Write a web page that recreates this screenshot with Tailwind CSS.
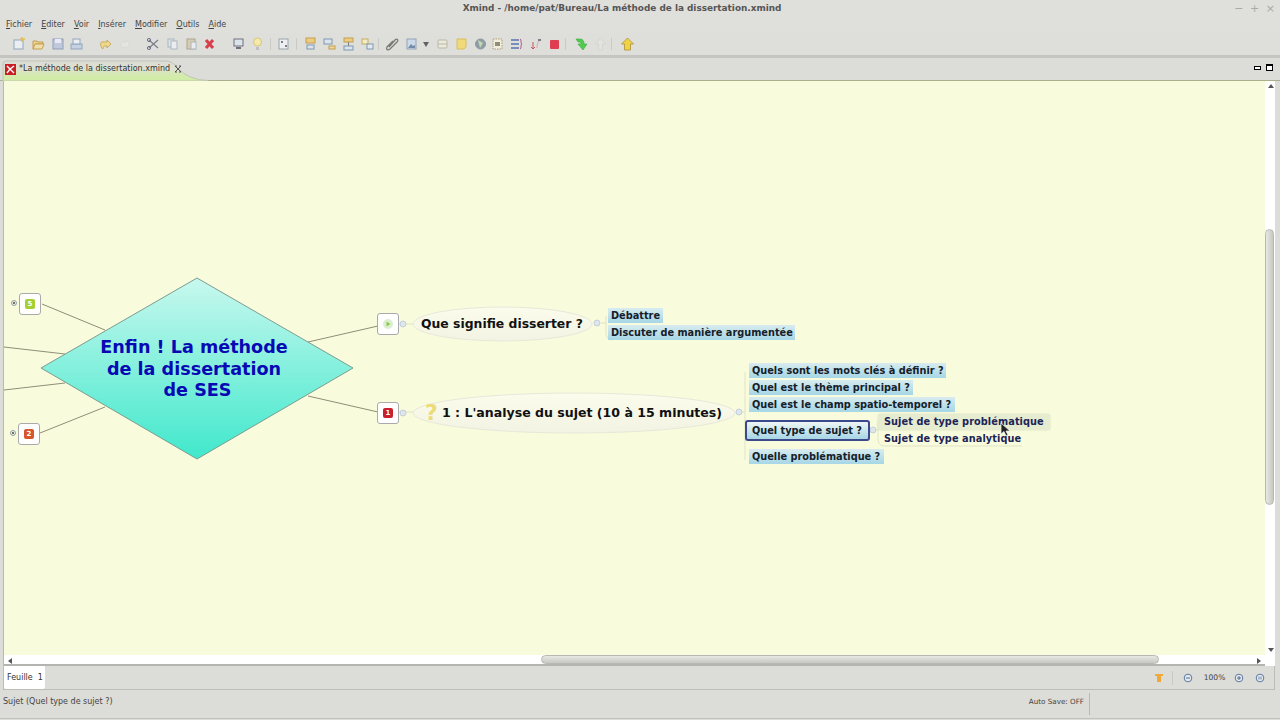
<!DOCTYPE html>
<html lang="fr">
<head>
<meta charset="UTF-8">
<title>Xmind</title>
<script src="https://cdn.jsdelivr.net/npm/@tailwindcss/browser@4"></script>
</head>
<body class="w-[1280px] h-[720px] overflow-hidden bg-[#dcdcd8] font-['DejaVu_Sans',sans-serif] text-[#3c3c3c]">

<!-- title bar -->
<div class="h-[17px] flex items-center relative bg-[#dfdfdb]">
  <div class="w-full text-center text-[8.9px] font-bold text-[#555] pr-[36px]">Xmind - /home/pat/Bureau/La méthode de la dissertation.xmind</div>
  <div class="absolute right-[5px] top-[3px] flex gap-[6.5px] text-[11px] leading-3 text-[#aaa]"><span>−</span><span>+</span><span>×</span></div>
</div>

<!-- menu -->
<div class="h-4 flex items-center pl-[6px] gap-[9px] text-[8px] text-[#444] bg-[#dfdfdb]">
  <span><u>F</u>ichier</span><span><u>E</u>diter</span><span><u>V</u>oir</span><span><u>I</u>nsérer</span><span><u>M</u>odifier</span><span><u>O</u>utils</span><span><u>A</u>ide</span>
</div>

<!-- toolbar -->
<div class="h-[25px] bg-[#dededa] border-b-[3px] border-[#c4c4c0]">
<div class="h-[22px] flex items-center pl-[10px] opacity-80">
  <svg class="w-[19px] h-4" viewBox="0 0 19 16"><rect x="4" y="4" width="9" height="9" fill="#eef3f8" stroke="#7f9ab5"/><path d="M12 1v5M10 3h5" stroke="#e4b93c" stroke-width="1.5"/></svg>
  <svg class="w-[19px] h-4" viewBox="0 0 19 16"><path d="M4 5h4l1 1h5v2H7l-2 5H4z" fill="#f0d080" stroke="#c09030"/><path d="M6 8h9l-2 5H4z" fill="#f6e0a0" stroke="#c09030"/></svg>
  <svg class="w-[19px] h-4" viewBox="0 0 19 16"><rect x="5" y="3" width="10" height="10" fill="#b8c4e0" stroke="#8090b0"/><rect x="7" y="3" width="6" height="4" fill="#eef"/></svg>
  <svg class="w-[19px] h-4" viewBox="0 0 19 16"><rect x="4" y="8" width="11" height="5" fill="#c0d0e4" stroke="#8098b8"/><rect x="6" y="3" width="7" height="5" fill="#eef2f8" stroke="#8098b8"/></svg>

  <svg class="w-[19px] h-4 ml-[9.5px]" viewBox="0 0 19 16"><path d="M4 8l4-4v2h5c2 0 2 5-1 7 0-3-1-3-4-3v2z" transform="matrix(-1 0 0 1 19 0)" fill="#f2d878" stroke="#c4a040"/></svg>
  <svg class="w-[19px] h-4" viewBox="0 0 19 16"><path d="M15 8l-4-4v2H6v5h5v2z" fill="#e6e6e2" stroke="#d8d8d4"/></svg>

  <svg class="w-[19px] h-4 ml-[10px]" viewBox="0 0 19 16"><path d="M5 12L14 4M5 4l9 8" stroke="#667" stroke-width="1.2"/><circle cx="5" cy="4" r="1.6" fill="none" stroke="#557"/><circle cx="5" cy="12" r="1.6" fill="none" stroke="#557"/></svg>
  <svg class="w-[19px] h-4" viewBox="0 0 19 16"><rect x="5" y="3" width="6" height="8" fill="#dde3ea" stroke="#a0adbc"/><rect x="8" y="5" width="6" height="8" fill="#eef1f5" stroke="#a0adbc"/></svg>
  <svg class="w-[19px] h-4" viewBox="0 0 19 16"><rect x="5" y="3" width="8" height="10" fill="#d8c8a8" stroke="#a09880"/><rect x="9" y="6" width="5" height="7" fill="#eef1f5" stroke="#a0adbc"/></svg>
  <svg class="w-[19px] h-4 -ml-[1px]" viewBox="0 0 19 16"><path d="M6 4l7 8M13 4l-7 8" stroke="#d81828" stroke-width="3"/></svg>

  <svg class="w-[19px] h-4 ml-[10px]" viewBox="0 0 19 16"><rect x="5" y="3" width="9" height="7" fill="#dce6f0" stroke="#556"/><path d="M7 12h5" stroke="#556" stroke-width="2"/></svg>
  <svg class="w-[19px] h-4" viewBox="0 0 19 16"><circle cx="9.5" cy="6" r="4" fill="#fbeea0" stroke="#d8c060"/><path d="M8 11h3v3H8z" fill="#b8bcc0"/></svg>
  <div class="w-px h-3 bg-[#c4c4c0] ml-[3px]"></div>
  <svg class="w-[19px] h-4 ml-[3px]" viewBox="0 0 19 16"><rect x="5" y="3" width="9" height="10" fill="#f2f4f6" stroke="#8a96a2"/><rect x="7" y="5" width="2" height="2" fill="#667"/><rect x="11" y="9" width="2" height="2" fill="#667"/></svg>
  <div class="w-px h-3 bg-[#c4c4c0] ml-[3px]"></div>
  <svg class="w-[19px] h-4 ml-[4px]" viewBox="0 0 19 16"><rect x="5" y="2" width="9" height="5" fill="#f0c868" stroke="#c09030"/><rect x="6" y="9" width="7" height="4" fill="#dce6f0" stroke="#6688aa"/></svg>
  <svg class="w-[19px] h-4" viewBox="0 0 19 16"><rect x="4" y="3" width="8" height="5" fill="#dce6f0" stroke="#6688aa"/><rect x="9" y="10" width="6" height="3" fill="#f0d890" stroke="#c09030"/></svg>
  <svg class="w-[19px] h-4" viewBox="0 0 19 16"><rect x="5" y="2" width="9" height="4" fill="#f0c868" stroke="#c09030"/><rect x="5" y="10" width="9" height="4" fill="#dce6f0" stroke="#6688aa"/><path d="M9.500 6v4" stroke="#667"/></svg>
  <svg class="w-[19px] h-4" viewBox="0 0 19 16"><rect x="4" y="3" width="6" height="5" fill="#f8f0c0" stroke="#c0a040"/><rect x="9" y="8" width="6" height="5" fill="#e8eef4" stroke="#6688aa"/></svg>

  <div class="w-px h-3 bg-[#c4c4c0] ml-[1px]"></div>
  <svg class="w-[19px] h-4 ml-[4px]" viewBox="0 0 19 16"><path d="M6 11l6-7c2-2 4 0 2 2l-7 7c-3 2-4 0-3-2l6-6" fill="none" stroke="#606060" stroke-width="1.3"/></svg>
  <svg class="w-[19px] h-4" viewBox="0 0 19 16"><rect x="5" y="3" width="9" height="10" fill="#c8d8ec" stroke="#8098b0"/><path d="M6 12l3-4 2 2 2-1v3z" fill="#5a7898"/></svg>
  <svg class="w-[11px] h-4" viewBox="0 0 11 16"><path d="M2 6h6l-3 5z" fill="#444"/></svg>
  <svg class="w-[19px] h-4 ml-[1px]" viewBox="0 0 19 16"><rect x="5" y="4" width="9" height="8" rx="1" fill="#f0eee0" stroke="#b0b098"/><path d="M5 8h9" stroke="#b0b098"/></svg>
  <svg class="w-[19px] h-4" viewBox="0 0 19 16"><path d="M5 3h9v8l-2 2H5z" fill="#f4d860" stroke="#d8b840"/></svg>
  <svg class="w-[19px] h-4" viewBox="0 0 19 16"><circle cx="9.500" cy="8" r="5" fill="#7c8c98" stroke="#808890"/><path d="M7 4l5 3-3 5z" fill="#b8d8a8"/></svg>
  <svg class="w-[19px] h-4 -ml-[2px]" viewBox="0 0 19 16"><rect x="5" y="3" width="9" height="10" fill="#f6f2e0" stroke="#a09060" stroke-dasharray="1.500 1"/><rect x="7" y="6" width="5" height="4" fill="#807860"/></svg>
  <svg class="w-[19px] h-4" viewBox="0 0 19 16"><path d="M4 4h8M4 8h8M4 12h8" stroke="#3858a8" stroke-width="1.500"/><path d="M13 3c2 0 0 5 2 5-2 0 0 5-2 5" fill="none" stroke="#b03080"/></svg>
  <svg class="w-[19px] h-4" viewBox="0 0 19 16"><path d="M7 13V6M5 11l2 2 2-2" fill="none" stroke="#c83040"/><path d="M11 12c0-4 1-6 2-7" fill="none" stroke="#c8a0a8"/><rect x="12" y="3" width="3" height="2" fill="#667"/></svg>
  <svg class="w-[19px] h-4" viewBox="0 0 19 16"><rect x="5" y="4" width="9" height="9" rx="1" fill="#e01830"/></svg>

  <div class="w-px h-3 bg-[#c4c4c0] ml-[1px]"></div>
  <svg class="w-[19px] h-4 ml-[6px]" viewBox="0 0 19 16"><path d="M4 3h4c3 0 4 2 4 5h3l-4 6-5-6h3c0-2-1-2-3-2z" fill="#2cc82c" stroke="#1c9c1c" stroke-width=".6"/></svg>
  <svg class="w-[19px] h-4" viewBox="0 0 19 16"><path d="M9.500 2l5 6h-3v6h-4V8h-3z" fill="#e4e4e0" stroke="#d4d4d0"/></svg>
  <div class="w-px h-3 bg-[#c4c4c0] ml-[1px]"></div>
  <svg class="w-[19px] h-4 ml-[6px]" viewBox="0 0 19 16"><path d="M9.500 2l6 6h-3v6h-6V8h-3z" fill="#f8d020" stroke="#a08010" stroke-width=".8"/></svg>
</div>
</div>

<!-- editor tab bar -->
<div class="h-[23px] relative flex items-end bg-[#dcdcd8] border-b border-[#aab08c]">
  <svg class="absolute left-0 top-0 w-[215px] h-[23px]" viewBox="0 0 215 23">
    <defs><linearGradient id="tab" gradientUnits="userSpaceOnUse" x1="0" y1="3" x2="0" y2="23"><stop offset="0" stop-color="#dcdcd8"/><stop offset=".45" stop-color="#dde2cc"/><stop offset=".7" stop-color="#d4eaae"/><stop offset="1" stop-color="#d0eca4"/></linearGradient></defs>
    <path d="M3 23V6q0-3 3-3h160q6 0 12 7q10 12 30 12.500V23z" fill="url(#tab)" stroke="#c2c6b4"/>
  </svg>
  <div class="relative h-[22px] flex items-center pl-[5px] gap-[3px]">
    <svg class="w-[11px] h-[11px]" viewBox="0 0 11 11"><rect width="11" height="11" fill="#c81e24"/><path d="M2 2l3 3 4-3M2 9l3-4 4 4" fill="none" stroke="#fff" stroke-width="1.400"/></svg>
    <span class="text-[8px] text-[#333]">*La méthode de la dissertation.xmind</span>
    <svg class="w-[8px] h-[8px] ml-[1px]" viewBox="0 0 8 8"><path d="M1 1l6 6M7 1L1 7M1 1h2M7 7H5M7 1H5M1 7h2" stroke="#555" fill="none"/></svg>
  </div>
  <div class="absolute right-[7px] top-[6px] flex items-center gap-[5px]">
    <div class="w-[7px] h-[4px] border border-black bg-white"></div>
    <div class="w-[7px] h-[7px] border border-black border-t-2 bg-white"></div>
  </div>
</div>

<!-- canvas + scrollbars -->
<div class="h-[585px] flex pl-[3px] pr-[5px]">
  <div class="w-[1262px] flex flex-col border-l border-[#b8b8b4]">
    <div class="relative h-[574px] overflow-hidden bg-[#f9fcdc]">
      <svg class="absolute inset-0 w-[1261px] h-[574px]" viewBox="4 81 1261 574">
        <defs>
          <linearGradient id="diamond" x1="0" y1="0" x2="0" y2="1"><stop offset="0" stop-color="#c8f8ee"/><stop offset="1" stop-color="#40e8cc"/></linearGradient>
          <linearGradient id="bubble" x1="0" y1="0" x2="0" y2="1"><stop offset="0" stop-color="#fbfcec"/><stop offset="1" stop-color="#f2f3e2"/></linearGradient>
        </defs>
        <g stroke="#8e8e78" fill="none">
          <path d="M42 304L105 330M4 347L65 354M4 390L65 383M40 433L105 407M308 342L378 326M308 396L378 412"/>
        </g>
        <g stroke="#dfe2c4" fill="none">
          <path d="M399 324H413M399 412H413"/>
          <path d="M601 323H606M606 316V332Q606 340 612 340"/>
          <path d="M745 412V372M745 412V460M738 412H745"/>
          <path d="M872 430H878M878 422V438Q878 446 884 446H1022"/>
        </g>
        <path d="M197 278L353 368L197 459L41 368Z" fill="url(#diamond)" stroke="#7d9c90"/>
        <ellipse cx="502.500" cy="324" rx="89.500" ry="17" fill="url(#bubble)" stroke="#e8e8da"/>
        <ellipse cx="574" cy="413" rx="161" ry="20" fill="url(#bubble)" stroke="#e8e8da"/>
        <g fill="#f4f6e2" stroke="#7a8a90" stroke-width=".8">
          <circle cx="14" cy="303" r="2.500"/><circle cx="13" cy="433" r="2.500"/>
        </g>
        <circle cx="14" cy="303" r="1" fill="#444"/><circle cx="13" cy="433" r="1" fill="#444"/>
        <g fill="#dfe6ea" stroke="#b8c8e0" stroke-width=".8">
          <circle cx="403" cy="324" r="3"/><circle cx="403" cy="413" r="3"/><circle cx="597" cy="323" r="3"/><circle cx="739" cy="412" r="3"/><circle cx="873" cy="430" r="3"/>
        </g>
      </svg>

      <!-- central topic -->
      <div class="absolute left-[0px] top-[256px] w-[380px] text-[17.6px] leading-[21.5px] font-bold text-[#0808b4] text-center">
        <div>Enfin ! La méthode</div>
        <div>de la dissertation</div>
        <div class="pl-[7px]">de SES</div>
      </div>

      <!-- marker boxes -->
      <div class="absolute left-[15px] top-[212px] w-[22px] h-[22px] flex items-center justify-center rounded-[3px] bg-white border border-[#aaa]">
        <div class="w-[10px] h-[10px] rounded-[2px] bg-[#a4d030] text-white text-[7px] leading-[10px] font-bold text-center">5</div>
      </div>
      <div class="absolute left-[14px] top-[342px] w-[22px] h-[22px] flex items-center justify-center rounded-[3px] bg-white border border-[#aaa]">
        <div class="w-[10px] h-[10px] rounded-[2px] bg-[#d8562c] text-white text-[7px] leading-[10px] font-bold text-center">2</div>
      </div>
      <div class="absolute left-[373px] top-[232px] w-[22px] h-[22px] flex items-center justify-center rounded-[3px] bg-white border border-[#aaa]">
        <svg class="w-[10px] h-[10px]" viewBox="0 0 10 10"><circle cx="5" cy="5" r="5" fill="#dcefd0"/><path d="M3.500 2.500L7.500 5l-4 2.500z" fill="#8cc850"/></svg>
      </div>
      <div class="absolute left-[373px] top-[321px] w-[22px] h-[22px] flex items-center justify-center rounded-[3px] bg-white border border-[#aaa]">
        <div class="w-[10px] h-[10px] rounded-[2px] bg-[#c8202c] text-white text-[7px] leading-[10px] font-bold text-center">1</div>
      </div>

      <!-- main topics -->
      <div class="absolute left-[417px] top-[234px] text-[12.4px] leading-[18px] font-bold text-[#111] whitespace-nowrap">Que signifie disserter ?</div>
      <div class="absolute left-[421px] top-[320px] text-[22px] leading-6 font-bold text-[#ecdc78]">?</div>
      <div class="absolute left-[438px] top-[323px] text-[12.55px] leading-[18px] font-bold text-[#111] whitespace-nowrap">1 : L'analyse du sujet (10 à 15 minutes)</div>

      <!-- subtopics -->
      <div class="absolute left-[604px] top-[227px] h-[15px] w-[55px] pl-[3px] text-[9.75px] leading-[16px] font-bold text-[#15202a] bg-gradient-to-b from-[#d8ecef] to-[#a6d6e6] whitespace-nowrap">Débattre</div>
      <div class="absolute left-[604px] top-[244px] h-[15px] w-[187px] pl-[3px] text-[9.75px] leading-[16px] font-bold text-[#15202a] bg-gradient-to-b from-[#d8ecef] to-[#a6d6e6] whitespace-nowrap">Discuter de manière argumentée</div>

      <div class="absolute left-[745px] top-[282px] h-[15px] w-[197px] pl-[3px] text-[9.75px] leading-[16px] font-bold text-[#15202a] bg-gradient-to-b from-[#d8ecef] to-[#a6d6e6] whitespace-nowrap">Quels sont les mots clés à définir ?</div>
      <div class="absolute left-[745px] top-[299px] h-[15px] w-[164px] pl-[3px] text-[9.75px] leading-[16px] font-bold text-[#15202a] bg-gradient-to-b from-[#d8ecef] to-[#a6d6e6] whitespace-nowrap">Quel est le thème principal ?</div>
      <div class="absolute left-[745px] top-[316px] h-[15px] w-[206px] pl-[3px] text-[9.75px] leading-[16px] font-bold text-[#15202a] bg-gradient-to-b from-[#d8ecef] to-[#a6d6e6] whitespace-nowrap">Quel est le champ spatio-temporel ?</div>
      <div class="absolute left-[741px] top-[339px] h-[21px] w-[125px] pl-[5px] rounded-[3px] border-2 border-[#3c4a8c] text-[9.75px] leading-[17px] font-bold text-[#15202a] bg-gradient-to-b from-[#eef6f4] to-[#a6d6e6] whitespace-nowrap">Quel type de sujet ?</div>
      <div class="absolute left-[745px] top-[368px] h-[15px] w-[135px] pl-[3px] text-[9.75px] leading-[16px] font-bold text-[#15202a] bg-gradient-to-b from-[#d8ecef] to-[#a6d6e6] whitespace-nowrap">Quelle problématique ?</div>

      <div class="absolute left-[874px] top-[333px] h-[16px] w-[172px] pl-[6px] rounded-[2px] bg-[#e6ecd0] shadow-[0_0_2px_#d0d6b8] text-[9.75px] leading-[16px] font-bold tracking-[0.08px] text-[#1c2458] whitespace-nowrap">Sujet de type problématique</div>
      <div class="absolute left-[880px] top-[350px] text-[9.75px] leading-[16px] font-bold tracking-[0.08px] text-[#1c2458] whitespace-nowrap">Sujet de type analytique</div>

      <svg class="absolute left-[996px] top-[341px] w-[12px] h-[16px]" viewBox="0 0 12 16"><path d="M1 1v11l3-2.500 2 4.500 2-1-2-4h4z" fill="#222" stroke="#eee" stroke-width=".8"/></svg>
    </div>
    <!-- horizontal scrollbar -->
    <div class="h-[11px] flex items-center bg-white border-b-2 border-[#b4b4b0] relative">
      <span class="absolute left-[4px] top-[3px] w-0 h-0 border-y-[3px] border-y-transparent border-r-[4px] border-r-[#555]"></span>
      <div class="absolute left-[537px] top-0 w-[618px] h-[9px] rounded-full bg-gradient-to-b from-[#e8e8e4] to-[#c8c8c2] border border-[#b8b8b4]"></div>
      <span class="absolute right-[4px] top-[3px] w-0 h-0 border-y-[3px] border-y-transparent border-l-[4px] border-l-[#555]"></span>
    </div>
  </div>
  <!-- vertical scrollbar -->
  <div class="w-[10px] h-[585px] relative bg-white">
    <span class="absolute left-[3px] top-[3px] w-0 h-0 border-x-[3px] border-x-transparent border-b-[4px] border-b-[#555]"></span>
    <div class="absolute left-0 top-[148px] w-[9px] h-[276px] rounded-full bg-gradient-to-r from-[#e8e8e4] to-[#c8c8c2] border border-[#b8b8b4]"></div>
    <span class="absolute left-[3px] top-[567px] w-0 h-0 border-x-[3px] border-x-transparent border-t-[4px] border-t-[#555]"></span>
  </div>
</div>

<!-- sheet tabs -->
<div class="h-[24px] ml-[3px] mr-[5px] flex items-stretch border-x border-b border-[#bcbcb8]">
  <div class="w-[41px] bg-white text-[8px] leading-[24px] pl-[3px] text-[#333] rounded-b-[2px] whitespace-nowrap">Feuille&nbsp;&nbsp;1</div>
  <div class="ml-auto flex items-center text-[#5878a0]">
    <div class="w-[26px] h-[22px] flex items-center justify-center"><svg class="w-[10px] h-[10px]" viewBox="0 0 10 10"><path d="M1 1h8v2H7v6H3V3H1z" fill="#f0a838"/></svg></div>
    <div class="w-px h-[14px] bg-[#c8c8c4] mr-[10px]"></div>
    <svg class="w-[10px] h-[10px]" viewBox="0 0 10 10"><circle cx="5" cy="5" r="3.800" fill="#e8ecf0" stroke="#5878a0"/><path d="M3 5h4" stroke="#506888"/></svg>
    <span class="w-[37px] text-center text-[7.6px] text-[#444] ml-[3px]">100%</span>
    <svg class="w-[10px] h-[10px] ml-[1px]" viewBox="0 0 10 10"><circle cx="5" cy="5" r="3.800" fill="#e8ecf0" stroke="#5878a0"/><path d="M3 5h4M5 3v4" stroke="#506888"/></svg>
    <svg class="w-[10px] h-[10px] ml-[11px] mr-[9px]" viewBox="0 0 10 10"><circle cx="5" cy="5" r="3.800" fill="#e8ecf0" stroke="#5878a0"/><rect x="3" y="3.500" width="4" height="3" fill="#a8b8c8"/></svg>
  </div>
</div>

<!-- status bar -->
<div class="h-[29px] flex items-start pl-[3px] text-[8px] text-[#444] border-b border-[#c0c0bc]">
  <span class="leading-[24px]">Sujet (Quel type de sujet ?)</span>
  <span class="ml-auto mr-[190px] mt-[3px] pr-[5px] h-[22px] leading-[18px] border-r border-[#b8b8b4] text-[7.2px]">Auto Save: OFF</span>
</div>
</body>
</html>
